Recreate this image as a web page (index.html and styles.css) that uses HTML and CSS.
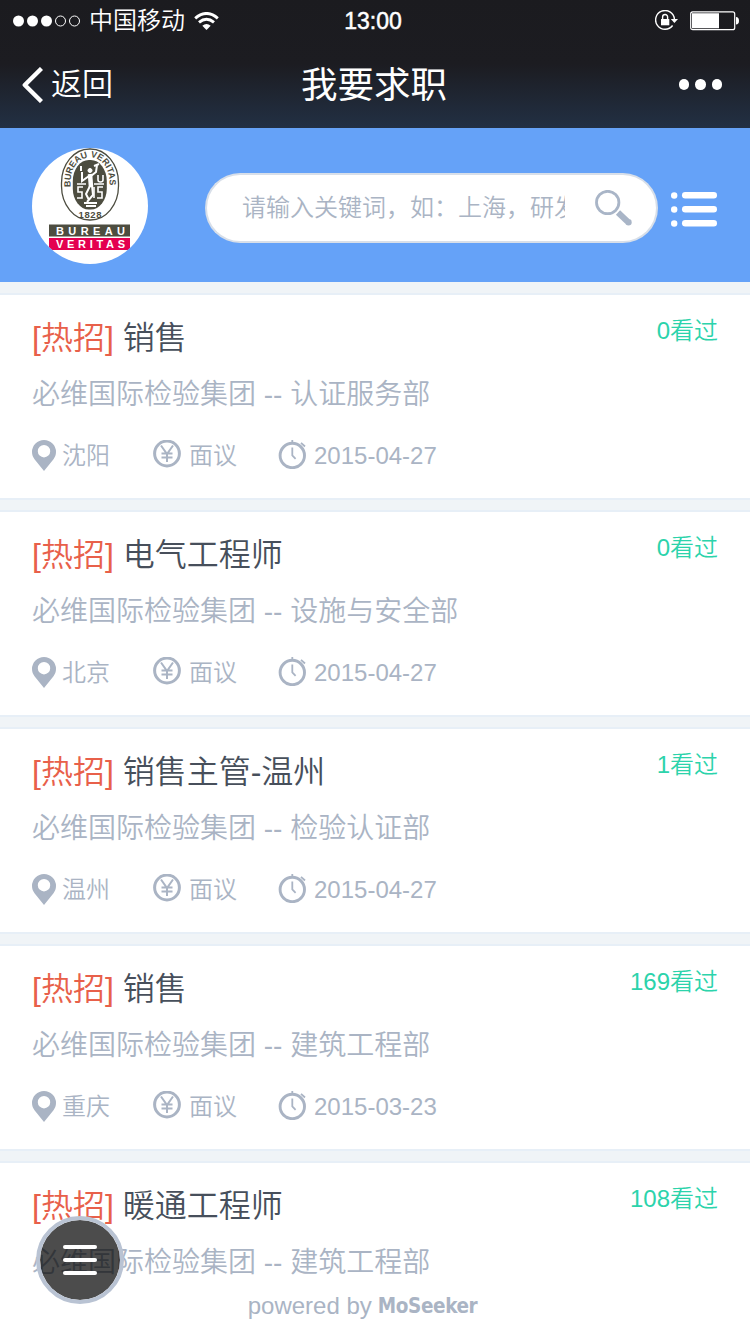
FILE: index.html
```html
<!DOCTYPE html>
<html lang="zh-CN">
<head>
  <meta charset="UTF-8">
  <title>我要求职</title>
  <meta name="viewport" content="width=device-width, initial-scale=1.0">
  <link rel="stylesheet" href="styles.css">
</head>
<body>
  <svg class="sprite" width="0" height="0">
    <symbol id="icon-pin" viewBox="0 0 24 31">
      <path fill="currentColor" fill-rule="evenodd" d="M12 0a12 12 0 0 1 12 12c0 3-1 5-2.500 7.200L12 31 2.500 19.200C1 17 0 15 0 12A12 12 0 0 1 12 0zm0 5a6.200 6.200 0 1 0 0 12.400A6.200 6.200 0 0 0 12 5z"/>
    </symbol>
    <symbol id="icon-yen" viewBox="0 0 28 28">
      <g fill="none" stroke="currentColor">
        <circle cx="14" cy="13.500" r="12.400" stroke-width="3"/>
        <path stroke-width="2" d="M8 5.500l6 8.500 6-8.500M14 13.500v8.500M8.500 13.500h11M8.500 17.500h11"/>
      </g>
    </symbol>
    <symbol id="icon-clock" viewBox="0 0 28 29">
      <g fill="none" stroke="currentColor">
        <circle cx="14.300" cy="15.500" r="12.200" stroke-width="2.900"/>
        <path stroke-width="1.800" d="M14.300 0v3M23 2.800l4 3.700M14.300 7.500v8l3.300 3.300"/>
      </g>
    </symbol>
  </svg>

  <header class="topbar">
    <div class="status">
      <div class="status-left">
        <svg width="68" height="12" viewBox="0 0 68 12">
          <g fill="#fff"><circle cx="5.500" cy="6" r="5.500"/><circle cx="19.500" cy="6" r="5.500"/><circle cx="33.500" cy="6" r="5.500"/></g>
          <g fill="none" stroke="#fff"><circle cx="47.500" cy="6" r="5"/><circle cx="61.500" cy="6" r="5"/></g>
        </svg>
        <span class="carrier">中国移动</span>
        <svg width="25" height="18" viewBox="0 0 25 18">
          <g fill="none" stroke="#fff" stroke-width="3">
            <path d="M1.200 6.300Q12.500-3.300 23.800 6.300"/>
            <path d="M5 10.400Q12.500 4.200 20 10.400"/>
          </g>
          <path fill="#fff" d="M8.300 13.700q4.200-3.300 8.400 0L12.500 18z"/>
        </svg>
      </div>
      <div class="time">13:00</div>
      <div class="status-right">
        <svg width="24" height="21" viewBox="0 0 24 21">
          <path fill="none" stroke="#fff" stroke-width="1.400" d="M17.600 15.500A9.400 9.400 0 1 1 19.400 9"/>
          <path fill="#fff" d="M15.800 9H23l-3.600 4z"/>
          <path fill="#fff" d="M6 9h8.300v6.300H6z"/>
          <path fill="none" stroke="#fff" stroke-width="1.400" d="M7.600 9.500V7a2.500 2.500 0 0 1 5 0v2.500"/>
        </svg>
        <svg width="49" height="20" viewBox="0 0 49 20">
          <rect x=".7" y=".9" width="44" height="17.800" rx="2" fill="none" stroke="#fff" stroke-width="1.200"/>
          <path fill="#fff" d="M2 2.300h27v15H2zM46 6q3 0 3 3.800T46 13.600z"/>
        </svg>
      </div>
    </div>
    <div class="navbar">
      <a class="back">
        <svg width="21" height="36" viewBox="0 0 21 36"><path fill="none" stroke="#fff" stroke-width="4.400" stroke-linejoin="round" d="M19.500 1.500L2.800 18l16.700 16.500"/></svg>
        返回
      </a>
      <h1>我要求职</h1>
      <div class="more"><i></i><i></i><i></i></div>
    </div>
  </header>

  <div class="search-bar">
    <svg class="logo" width="116" height="116" viewBox="0 0 116 116">
      <defs>
        <clipPath id="round"><circle cx="58" cy="58" r="58"/></clipPath>
        <path id="arc" d="M38.500 39C36-.5 80-.5 77.500 39V60"/>
      </defs>
      <g clip-path="url(#round)">
        <rect width="116" height="116" fill="#fff"/>
        <rect x="29.500" y="1" width="57" height="71" rx="28" ry="34" fill="#fff" stroke="#4d4d40" stroke-width="1.300"/>
        <rect x="40.800" y="12" width="34" height="49.500" rx="16" ry="21" fill="#4d4d40"/>
        <text class="logo-arc"><textPath href="#arc" textLength="78" lengthAdjust="spacingAndGlyphs">BUREAU VERITAS</textPath></text>
        <g fill="none" stroke="#fff">
          <circle cx="58" cy="22.500" r="2" fill="#fff"/>
          <path stroke-width="4.500" d="M58 26l1 13"/>
          <path stroke-width="2" d="M57 28l-7 5v-9M59 28l5-4 1-7M62 18l5-2M49 18v5M58 38l-4 8 3 6M60 38l1 9-6 7M52 55h13M54 58h10"/>
          <path stroke-width="1.600" d="M45 36h9M62 36h10M66 27v5q0 2 2.500 2t2.500-2v-5M51 39h-5v5h4v6h-5M62 39v11M71 39h-5v5h4v6h-5"/>
        </g>
        <text class="logo-year" x="58" y="69.500" text-anchor="middle" textLength="23">1828</text>
        <rect x="17" y="76.500" width="81" height="12" fill="#4d4d40"/>
        <rect x="17" y="90" width="81" height="12" fill="#e4004f"/>
        <text class="logo-name" x="24" y="86.500" textLength="69">BUREAU</text>
        <text class="logo-name" x="24" y="100" textLength="69">VERITAS</text>
      </g>
    </svg>
    <div class="search">
      <div class="search-input"><span>请输入关键词，如：上海，研发</span></div>
      <div class="search-btn">
        <svg width="38" height="37" viewBox="0 0 38 37">
          <circle cx="12.700" cy="12.500" r="11.200" fill="none" stroke="#a9b5c7" stroke-width="2.800"/>
          <path fill="none" stroke="#a9b5c7" stroke-width="6" d="M23 22.500l9.500 9"/>
          <circle cx="33.500" cy="32.300" r="3.200" fill="#a9b5c7"/>
        </svg>
      </div>
    </div>
    <svg class="menu" width="47" height="36" viewBox="0 0 47 36">
      <g fill="#fff">
        <circle cx="3.200" cy="3.500" r="3.200"/><rect x="11" y="0" width="35" height="6.500" rx="3.200"/>
        <circle cx="3.200" cy="17.500" r="3.200"/><rect x="11" y="14" width="35" height="6.500" rx="3.200"/>
        <circle cx="3.200" cy="31.500" r="3.200"/><rect x="11" y="28" width="35" height="6.500" rx="3.200"/>
      </g>
    </svg>
  </div>

  <div class="list">
    <div class="job">
      <div class="job-head"><h2><span class="hot">[热招]</span> 销售</h2><span class="views">0看过</span></div>
      <p class="dept">必维国际检验集团 -- 认证服务部</p>
      <div class="meta">
        <span class="city"><svg class="pin"><use href="#icon-pin"/></svg>沈阳</span>
        <span class="pay"><svg class="yen"><use href="#icon-yen"/></svg>面议</span>
        <span class="date"><svg class="clock"><use href="#icon-clock"/></svg>2015-04-27</span>
      </div>
    </div>
    <div class="job">
      <div class="job-head"><h2><span class="hot">[热招]</span> 电气工程师</h2><span class="views">0看过</span></div>
      <p class="dept">必维国际检验集团 -- 设施与安全部</p>
      <div class="meta">
        <span class="city"><svg class="pin"><use href="#icon-pin"/></svg>北京</span>
        <span class="pay"><svg class="yen"><use href="#icon-yen"/></svg>面议</span>
        <span class="date"><svg class="clock"><use href="#icon-clock"/></svg>2015-04-27</span>
      </div>
    </div>
    <div class="job">
      <div class="job-head"><h2><span class="hot">[热招]</span> 销售主管-温州</h2><span class="views">1看过</span></div>
      <p class="dept">必维国际检验集团 -- 检验认证部</p>
      <div class="meta">
        <span class="city"><svg class="pin"><use href="#icon-pin"/></svg>温州</span>
        <span class="pay"><svg class="yen"><use href="#icon-yen"/></svg>面议</span>
        <span class="date"><svg class="clock"><use href="#icon-clock"/></svg>2015-04-27</span>
      </div>
    </div>
    <div class="job">
      <div class="job-head"><h2><span class="hot">[热招]</span> 销售</h2><span class="views">169看过</span></div>
      <p class="dept">必维国际检验集团 -- 建筑工程部</p>
      <div class="meta">
        <span class="city"><svg class="pin"><use href="#icon-pin"/></svg>重庆</span>
        <span class="pay"><svg class="yen"><use href="#icon-yen"/></svg>面议</span>
        <span class="date"><svg class="clock"><use href="#icon-clock"/></svg>2015-03-23</span>
      </div>
    </div>
    <div class="job">
      <div class="job-head"><h2><span class="hot">[热招]</span> 暖通工程师</h2><span class="views">108看过</span></div>
      <p class="dept">必维国际检验集团 -- 建筑工程部</p>
      <div class="powered">powered by <b>MoSeeker</b></div>
    </div>
  </div>

  <div class="float-btn"><i></i><i></i><i></i></div>
</body>
</html>
```

FILE: styles.css
```css
* { box-sizing: border-box; }

body {
  margin: 0;
  height: 1334px;
  overflow: hidden;
  background: #f0f4f7;
  color: #aab4c4;
  font-family: "Liberation Sans", "Noto Sans CJK SC", sans-serif;
  font-weight: 350;
}

h1, h2, p { margin: 0; font-weight: 350; }
svg { display: block; flex: none; }
.sprite { position: absolute; }

/* top bar */
.topbar {
  height: 128px;
  background: linear-gradient(#1b1b1f, #1c1c21 50%, #223044);
  color: #fff;
}

.status {
  height: 41px;
  display: grid;
  grid-template-columns: 1fr auto 1fr;
  align-items: center;
  padding: 0 11px 0 13px;
}

.status-left, .status-right { display: flex; align-items: center; }
.status-right { justify-content: flex-end; gap: 11px; }
.carrier { font-size: 24px; line-height: 40px; margin: 0 9px 0 8px; }
.time { font-size: 23px; line-height: 24px; padding: 0 6px 0 0; -webkit-text-stroke: .5px #fff; }

.navbar {
  height: 87px;
  display: grid;
  grid-template-columns: 1fr auto 1fr;
  align-items: center;
  padding: 0 28px 0 22px;
}

.back { display: flex; align-items: center; gap: 8px; font-size: 31px; line-height: 60px; padding-top: 1px; }
.navbar h1 { font-size: 36.500px; font-weight: 400; line-height: 60px; padding: 2px 0 0 4px; }
.more { display: flex; justify-content: flex-end; gap: 6px; }
.more i { width: 10.500px; height: 10.500px; border-radius: 50%; background: #fff; }

/* company logo + search */
.search-bar {
  height: 154px;
  display: flex;
  align-items: center;
  padding: 0 32px;
  background: #65a2f8;
}

.logo { margin-top: 2px; }
.logo-arc, .logo-year, .logo-name { font-family: "Liberation Sans", sans-serif; font-weight: bold; }
.logo-arc { font-size: 9px; fill: #4d4d40; }
.logo-year { font-size: 9.500px; fill: #4d4d40; }
.logo-name { font-size: 11px; fill: #fff; }

.search { display: flex; width: 453px; height: 70px; margin: 6px 0 0 57px; }

.search-input {
  width: 371px;
  border: 2px solid #d8dfe9;
  border-right: 0;
  border-radius: 35px 0 0 35px;
  background: #fff;
  padding-left: 35px;
  font-size: 24px;
  line-height: 66px;
}

.search-input span {
  display: block;
  width: 323px;
  white-space: nowrap;
  overflow: hidden;
}

.search-btn {
  flex: 1;
  display: flex;
  align-items: center;
  padding-left: 19px;
  border: 2px solid #d8dfe9;
  border-left: 0;
  border-radius: 0 35px 35px 0;
  background: #fff;
}

.menu { margin: 9px 0 0 13px; }

/* job list */
.list { padding-top: 11px; }

.job {
  height: 207px;
  margin-bottom: 10px;
  padding: 15px 32px 0;
  border-top: 2px solid #e7eff7;
  border-bottom: 2px solid #e7eff7;
  background: #fff;
}

.job-head { display: flex; justify-content: space-between; }
.job-head h2 { font-size: 32px; line-height: 56px; color: #474f5b; }
.job-head .hot { color: #e8604a; }
.views { font-size: 24px; line-height: 42px; color: #2cd3ab; }
.dept { font-size: 28px; line-height: 58px; }

.meta { display: flex; font-size: 24px; line-height: 42px; padding-top: 11px; }
.meta span { display: flex; }
.city { width: 121px; gap: 6px; }
.pay { width: 125px; gap: 8px; }
.date { gap: 8px; }
.pin { width: 24px; height: 31px; margin-top: 5px; }
.yen { width: 28px; height: 28px; margin-top: 5px; }
.clock { width: 28px; height: 29px; margin-top: 5px; }

.powered { display: flex; justify-content: center; gap: 6px; font-size: 24px; line-height: 32px; margin-top: -2px; padding-right: 25px; }
.powered b { font-family: "DejaVu Sans Condensed", "DejaVu Sans", sans-serif; font-size: 20.500px; font-weight: bold; font-stretch: condensed; letter-spacing: -.4px; }

/* floating menu button */
.float-btn {
  position: fixed;
  left: 36px;
  top: 1216px;
  width: 88px;
  height: 88px;
  border: 4px solid #b9c3d3;
  border-radius: 50%;
  background: rgba(0, 0, 0, .7);
  background-clip: padding-box;
  display: flex;
  flex-direction: column;
  align-items: center;
  justify-content: center;
  gap: 9px;
}

.float-btn i { width: 34px; height: 4px; border-radius: 2px; background: #fff; }
```
